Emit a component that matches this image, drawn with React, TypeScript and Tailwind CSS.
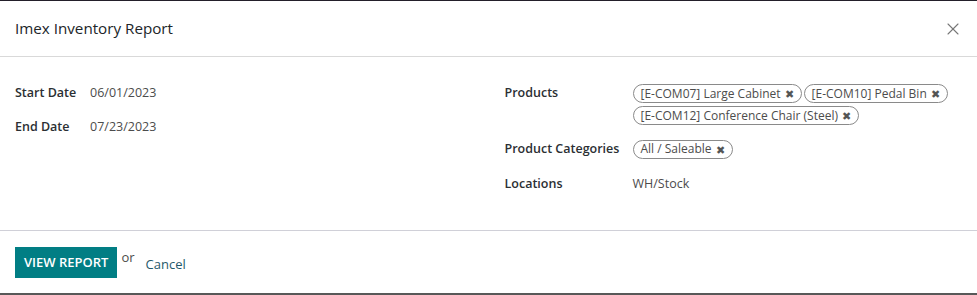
import { X } from "lucide-react";

const tagCls =
  "inline-flex items-center gap-[4px] rounded-full border border-[#8a8a8a] px-[7px] h-[19px] text-[12px] leading-none text-[#4c4c4c]";

const Tag = ({ label }: { label: string }) => (
  <span className={tagCls}>
    {label}
    <span className="text-[11px] text-[#555]">✖</span>
  </span>
);

const App = () => {
  return (
    <div
      className="w-[977px] h-[295px] bg-white flex flex-col border-t border-[#231f2a] border-b-2 border-b-[#585858]"
      style={{ fontFamily: '"Open Sans", "Noto Sans", sans-serif' }}
    >
      <div className="h-[56px] flex items-center justify-between pl-[15px] pr-[14px] border-b border-[#d9d9d9] shrink-0">
        <h4 className="text-[15.2px] font-medium text-[#212529]">Imex Inventory Report</h4>
        <button className="text-[#777]">
          <X size={20} strokeWidth={1.3} />
        </button>
      </div>

      <div className="flex-1 grid grid-cols-2 gap-x-8 px-[15px] pt-[26px] text-[12.5px]">
        <div className="flex flex-col gap-[14px]">
          <div className="flex items-center h-[20px]">
            <span className="w-[75px] font-semibold text-[#2b2f33]">Start Date</span>
            <span className="text-[#4c4c4c]">06/01/2023</span>
          </div>
          <div className="flex items-center h-[20px]">
            <span className="w-[75px] font-semibold text-[#2b2f33]">End Date</span>
            <span className="text-[#4c4c4c]">07/23/2023</span>
          </div>
        </div>

        <div className="flex flex-col">
          <div className="flex items-start">
            <span className="w-[128px] shrink-0 font-semibold text-[#2b2f33] leading-[20px]">Products</span>
            <div className="flex flex-wrap gap-x-[2px] gap-y-[3px] w-[320px] pt-[1px]">
              <Tag label="[E-COM07] Large Cabinet" />
              <Tag label="[E-COM10] Pedal Bin" />
              <Tag label="[E-COM12] Conference Chair (Steel)" />
            </div>
          </div>
          <div className="flex items-center mt-[14px]">
            <span className="w-[128px] shrink-0 font-semibold text-[#2b2f33] leading-[20px]">Product Categories</span>
            <Tag label="All / Saleable" />
          </div>
          <div className="flex items-center mt-[15px]">
            <span className="w-[128px] shrink-0 font-semibold text-[#2b2f33] leading-[20px]">Locations</span>
            <span className="text-[#4c4c4c]">WH/Stock</span>
          </div>
        </div>
      </div>

      <div className="h-[63px] shrink-0 border-t border-[#d0d0d8] flex items-start pl-[15px] pt-[16px]">
        <button className="h-[31px] px-[9px] bg-[#017e84] text-white text-[13px] font-semibold uppercase">
          View Report
        </button>
        <span className="text-[13px] text-[#4c4c4c] ml-[4px] mt-[1px]">or</span>
        <a className="text-[13px] text-[#1f5a6b] ml-[11px] mt-[8px]">Cancel</a>
      </div>
    </div>
  );
};

export default App;
